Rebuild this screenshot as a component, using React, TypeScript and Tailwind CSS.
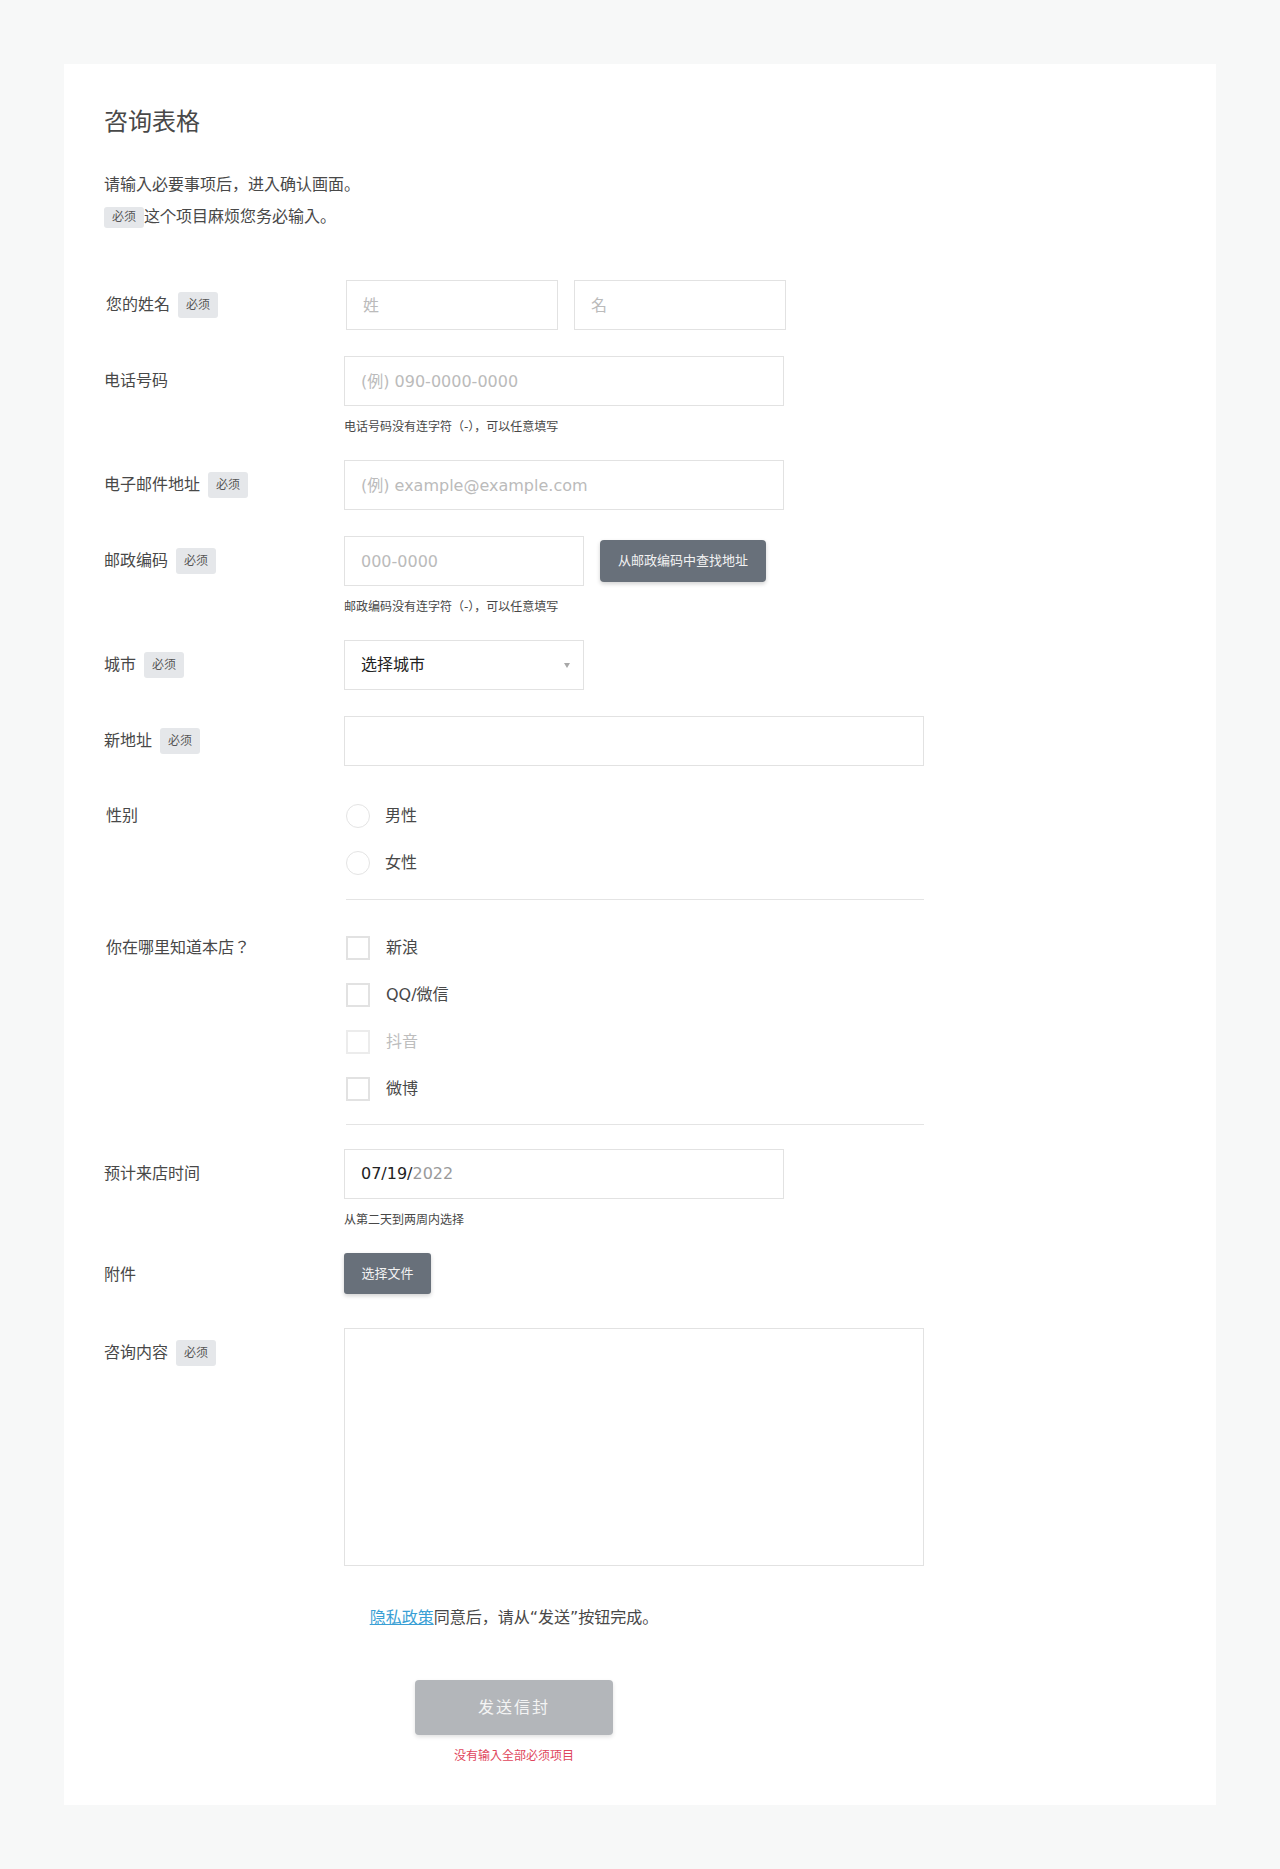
import React from "react";

function Badge() {
  return (
    <span className="inline-flex h-[26px] items-center rounded-[3px] bg-[#e5e7ea] px-2 text-[12px] leading-none text-[#555]">
      必须
    </span>
  );
}

function Label({ text, required }: { text: string; required?: boolean }) {
  return (
    <div className="flex h-[50px] w-[240px] shrink-0 items-center gap-2 text-[16px] text-[#484848]">
      <span>{text}</span>
      {required && <Badge />}
    </div>
  );
}

function Help({ text }: { text: string }) {
  return <p className="mt-[12px] text-[12px] leading-[18px] text-[#484848]">{text}</p>;
}

const inputCls =
  "h-[50px] border border-[#e2e2e2] bg-white px-4 text-[16px] text-[#222] outline-none placeholder:text-[#bbb]";

function Radio({ text }: { text: string }) {
  return (
    <label className="flex h-[47px] items-center gap-[15px] text-[16px] text-[#484848]">
      <span className="h-6 w-6 rounded-full border border-[#e4e4e4] bg-white" />
      <span>{text}</span>
    </label>
  );
}

function Check({ text, disabled }: { text: string; disabled?: boolean }) {
  return (
    <label className="flex h-[47px] items-center gap-4 text-[16px]">
      <span
        className={
          disabled
            ? "h-6 w-6 border-2 border-[#ececec] bg-white"
            : "h-6 w-6 border-2 border-[#e2e2e2] bg-white"
        }
      />
      <span className={disabled ? "text-[#bdbdbd]" : "text-[#484848]"}>{text}</span>
    </label>
  );
}

export default function App() {
  return (
    <div className="min-h-[1869px] bg-[#f7f8f8] p-16 font-['DejaVu_Sans','Noto_Sans_CJK_JP',sans-serif]">
      <div className="w-[1152px] bg-white p-10">
        <h1 className="text-[24px] leading-[36px] text-[#484848]">咨询表格</h1>

        <div className="mt-[29px] text-[16px] leading-[32px] text-[#484848]">
          <p>请输入必要事项后，进入确认画面。</p>
          <p>
            <span className="inline-block rounded-[3px] bg-[#e5e7ea] px-2 align-middle text-[12px] leading-[21px] text-[#555]">
              必须
            </span>
            这个项目麻烦您务必输入。
          </p>
        </div>

        <form className="w-[820px]">
          {/* Name */}
          <div className="ml-[2px] mt-[47px] flex items-start">
            <Label text="您的姓名" required />
            <div className="flex gap-4">
              <input className={`${inputCls} w-[212px]`} placeholder="姓" />
              <input className={`${inputCls} w-[212px]`} placeholder="名" />
            </div>
          </div>

          {/* Phone */}
          <div className="mt-[26px] flex items-start">
            <Label text="电话号码" />
            <div>
              <input className={`${inputCls} w-[440px]`} placeholder="(例) 090-0000-0000" />
              <Help text="电话号码没有连字符（-），可以任意填写" />
            </div>
          </div>

          {/* Email */}
          <div className="mt-[24px] flex items-start">
            <Label text="电子邮件地址" required />
            <input className={`${inputCls} w-[440px]`} placeholder="(例) example@example.com" />
          </div>

          {/* Zip */}
          <div className="mt-[26px] flex items-start">
            <Label text="邮政编码" required />
            <div>
              <div className="flex items-center gap-4">
                <input className={`${inputCls} w-[240px]`} placeholder="000-0000" />
                <button
                  type="button"
                  className="h-[42px] rounded-[4px] bg-[#68707a] px-[18px] text-[13px] text-[#f2f2f2] shadow-[0_2px_4px_rgba(0,0,0,0.18)]"
                >
                  从邮政编码中查找地址
                </button>
              </div>
              <Help text="邮政编码没有连字符（-），可以任意填写" />
            </div>
          </div>

          {/* City */}
          <div className="mt-[24px] flex items-start">
            <Label text="城市" required />
            <div className="relative flex h-[50px] w-[240px] items-center border border-[#e2e2e2] bg-white px-4 text-[16px] text-[#222]">
              <span>选择城市</span>
              <span className="absolute right-[13px] top-[22px] h-0 w-0 border-l-[3.5px] border-r-[3.5px] border-t-[5px] border-l-transparent border-r-transparent border-t-[#a8a8a8]" />
            </div>
          </div>

          {/* Address */}
          <div className="mt-[26px] flex items-start">
            <Label text="新地址" required />
            <input className={`${inputCls} w-[580px]`} />
          </div>

          {/* Gender */}
          <div className="ml-[2px] mt-[26px] flex items-start">
            <div className="flex h-[47px] w-[240px] shrink-0 items-center text-[16px] text-[#484848]">性别</div>
            <div className="w-[579px]">
              <Radio text="男性" />
              <Radio text="女性" />
              <div className="mt-[13px] border-t border-[#e4e4e4]" />
            </div>
          </div>

          {/* Where */}
          <div className="ml-[2px] mt-[24px] flex items-start">
            <div className="flex h-[47px] w-[240px] shrink-0 items-center text-[16px] text-[#484848]">
              你在哪里知道本店？
            </div>
            <div className="w-[579px]">
              <Check text="新浪" />
              <Check text="QQ/微信" />
              <Check text="抖音" disabled />
              <Check text="微博" />
              <div className="mt-[12px] border-t border-[#e4e4e4]" />
            </div>
          </div>

          {/* Date */}
          <div className="mt-[24px] flex items-start">
            <Label text="预计来店时间" />
            <div>
              <div className="flex h-[50px] w-[440px] items-center border border-[#e2e2e2] bg-white px-4 text-[16px]">
                <span className="text-[#222]">07/19/</span>
                <span className="text-[#9a9a9a]">2022</span>
              </div>
              <Help text="从第二天到两周内选择" />
            </div>
          </div>

          {/* File */}
          <div className="mt-[24px] flex items-start">
            <div className="flex h-[44px] w-[240px] shrink-0 items-center text-[16px] text-[#484848]">附件</div>
            <button
              type="button"
              className="h-[41px] w-[87px] rounded-[3px] bg-[#68707a] text-[13px] text-[#f2f2f2] shadow-[0_2px_4px_rgba(0,0,0,0.18)]"
            >
              选择文件
            </button>
          </div>

          {/* Message */}
          <div className="mt-[31px] flex items-start">
            <Label text="咨询内容" required />
            <textarea className="h-[238px] w-[580px] resize-none border border-[#e2e2e2] bg-white p-4 text-[16px] outline-none" />
          </div>

          <p className="mt-[40px] text-center text-[16px] leading-[24px] text-[#484848]">
            <a href="#" className="text-[#3a9fd5] underline">
              隐私政策
            </a>
            同意后，请从“发送”按钮完成。
          </p>

          <div className="mt-[50px] flex flex-col items-center">
            <button
              type="button"
              className="h-[55px] w-[198px] rounded-[4px] bg-[#b3b6ba] text-[16px] tracking-[2px] text-[#f4f4f4] shadow-[0_2px_4px_rgba(0,0,0,0.12)]"
            >
              发送信封
            </button>
            <p className="mt-[12px] text-[12px] leading-[18px] text-[#e0465c]">没有输入全部必须项目</p>
          </div>
        </form>
      </div>
    </div>
  );
}
